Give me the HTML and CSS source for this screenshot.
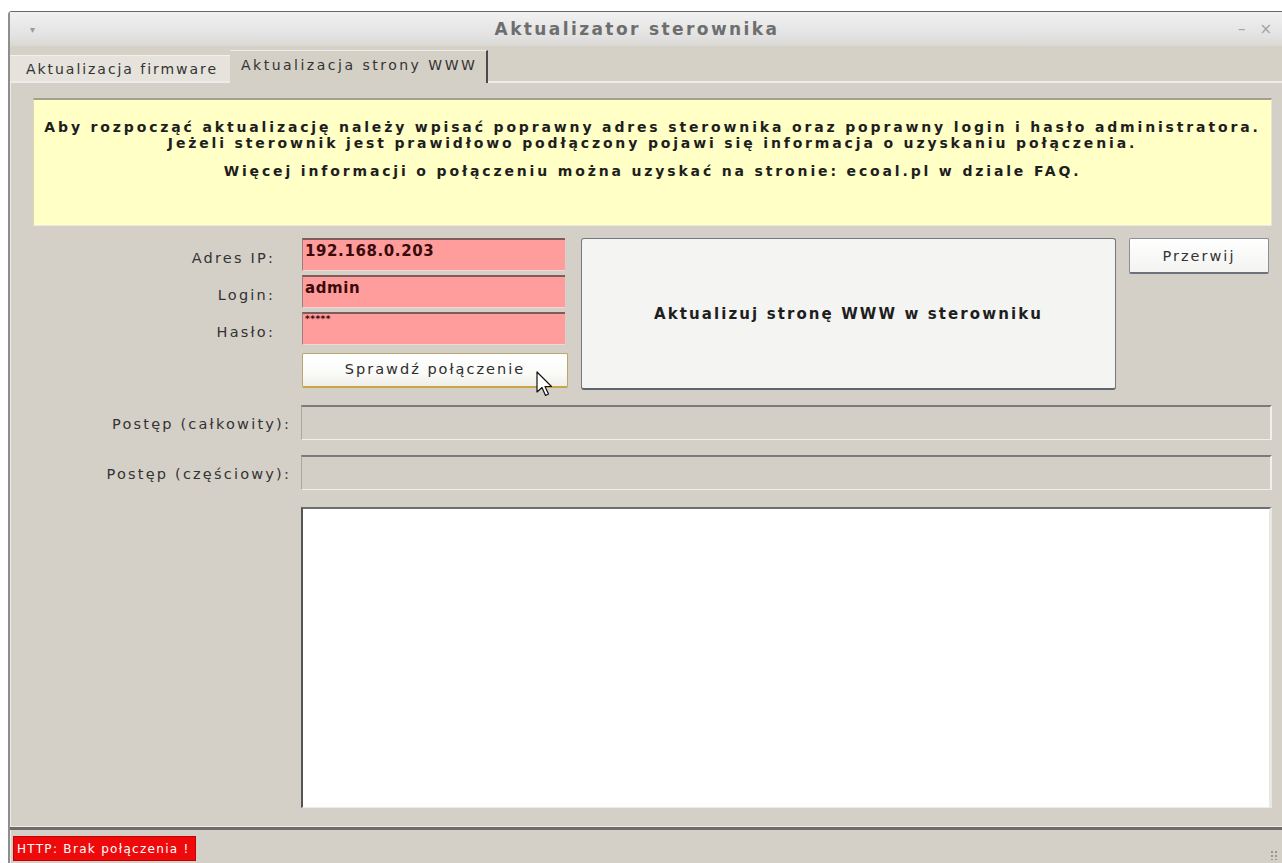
FILE: index.html
```html
<!DOCTYPE html>
<html lang="pl">
<head>
<meta charset="utf-8">
<title>Aktualizator sterownika</title>
<link rel="stylesheet" href="styles.css">
</head>
<body>
<div class="window">
  <div class="titlebar">
    <span class="menu-btn">&#9662;</span>
    <span class="title">Aktualizator sterownika</span>
    <span class="controls"><span class="ctl">&ndash;</span><span class="ctl">&times;</span></span>
  </div>

  <div class="tabstrip">
    <div class="tab">Aktualizacja firmware</div>
    <div class="tab active">Aktualizacja strony WWW</div>
    <div class="tab-fill"></div>
  </div>

  <div class="panel">
    <div class="notice">
      <p>Aby rozpocząć aktualizację należy wpisać poprawny adres sterownika oraz poprawny login i hasło administratora.<br>
      Jeżeli sterownik jest prawidłowo podłączony pojawi się informacja o uzyskaniu połączenia.</p>
      <p>Więcej informacji o połączeniu można uzyskać na stronie: ecoal.pl w dziale FAQ.</p>
    </div>

    <div class="controls-row">
      <div class="login-form">
        <label class="lbl">Adres IP:</label>
        <div class="field">192.168.0.203</div>
        <label class="lbl">Login:</label>
        <div class="field">admin</div>
        <label class="lbl">Hasło:</label>
        <div class="field pass">*****</div>
        <span></span>
        <button class="btn check">Sprawdź połączenie
          <svg class="cursor" width="20" height="30" viewBox="0 0 20 30">
            <path d="M2 1 L2 21 L7 16.5 L10.5 24.5 L13.5 23 L10 15.5 L16.5 15.5 Z" fill="#fff" stroke="#111" stroke-width="1.2" stroke-linejoin="round"/>
          </svg>
        </button>
      </div>
      <button class="btn update">Aktualizuj stronę WWW w sterowniku</button>
      <button class="btn abort">Przerwij</button>
    </div>

    <div class="progress-row">
      <span class="plbl">Postęp (całkowity):</span>
      <div class="bar"></div>
    </div>
    <div class="progress-row">
      <span class="plbl">Postęp (częściowy):</span>
      <div class="bar"></div>
    </div>

    <div class="log-row">
      <div class="log"></div>
    </div>
  </div>

  <div class="statusbar">
    <span class="status-err">HTTP: Brak połączenia !</span>
    <span class="grip"></span>
  </div>
</div>
</body>
</html>
```

FILE: styles.css
```css
* { box-sizing: border-box; }

html, body {
  margin: 0;
  padding: 0;
  background: #ffffff;
  width: 1282px;
  height: 863px;
  overflow: hidden;
}

body {
  font-family: "DejaVu Sans", "Noto Sans", sans-serif;
  color: #2a2a2a;
}

.window {
  margin: 11px 0 0 8px;
  height: 852px;
  display: flex;
  flex-direction: column;
  background: #d4d0c8;
  border-left: 2px solid #8e8e8e;
  border-top: 1px solid #6a6a6a;
  border-top-left-radius: 4px;
  box-shadow: inset 1px 0 0 #ecebe8;
}

/* ---- title bar ---- */
.titlebar {
  height: 34px;
  display: flex;
  align-items: center;
  background: linear-gradient(#f1f1f1, #e2e2e2 70%, #d9d8d4);
  padding: 0 10px 0 20px;
}
.menu-btn {
  color: #9a9a9a;
  font-size: 10px;
  width: 20px;
}
.title {
  flex: 1;
  text-align: center;
  font-weight: bold;
  font-size: 17px;
  letter-spacing: 2.4px;
  color: #6e6e6e;
  padding-right: 14px;
}
.controls {
  display: flex;
  gap: 14px;
  color: #a4a4a4;
  font-size: 15px;
}

/* ---- tabs ---- */
.tabstrip {
  height: 37px;
  display: flex;
  align-items: flex-end;
  background: #d5d1c6;
}
.tab {
  height: 28px;
  padding: 0 12px 0 16px;
  display: flex;
  align-items: center;
  font-size: 14px;
  letter-spacing: 1.95px;
  color: #333;
  background: #e5e3dc;
  border-top: 1px solid #f2f1ee;
  border-bottom: 2px solid #eeece8;
}
.tab.active {
  height: 33px;
  padding: 0 9px 4px 11px;
  letter-spacing: 2.5px;
  background: #d4d0c6;
  border-top: 1px solid #eeece8;
  border-right: 2px solid #4a4a4a;
  border-bottom: none;
}
.tab-fill {
  flex: 1;
  height: 2px;
  background: #eeece8;
}

/* ---- panel ---- */
.panel {
  flex: 1;
  display: flex;
  flex-direction: column;
  padding: 15px 10px 0 0;
}

.notice {
  margin-left: 23px;
  height: 128px;
  background: #ffffc6;
  border-top: 2px solid #a3a187;
  border-left: 1px solid #d9d8b8;
  border-right: 1px solid #e6e5d8;
  border-bottom: 1px solid #ebeadc;
  text-align: center;
  font-weight: bold;
  font-size: 14px;
  letter-spacing: 2.85px;
  line-height: 16px;
  color: #1e1e1e;
  padding-top: 19px;
}
.notice p { margin: 0 0 12px; }

/* ---- fields and buttons ---- */
.controls-row {
  display: flex;
  align-items: flex-start;
  margin-top: 12px;
}
.login-form {
  display: grid;
  grid-template-columns: 265px 263px;
  column-gap: 27px;
  row-gap: 4px;
}
.lbl {
  text-align: right;
  font-size: 14.5px;
  letter-spacing: 2.2px;
  color: #333;
  padding-top: 12px;
}
.field {
  height: 33px;
  background: #ff9d9d;
  border-top: 2px solid #7e5c5c;
  border-left: 1px solid #a37c7c;
  border-bottom: 1px solid #f5d4d4;
  font-weight: bold;
  font-size: 15px;
  letter-spacing: 0.6px;
  color: #3a0a0a;
  padding: 2px 0 0 2px;
}
.field.pass {
  font-size: 9px;
  letter-spacing: 0.5px;
  padding-top: 0;
}

.btn {
  font-family: inherit;
  cursor: default;
}
.check {
  position: relative;
  margin-top: 4px;
  width: 266px;
  height: 35px;
  background: linear-gradient(#ffffff, #fbfbf8 60%, #efeee8);
  border: 1px solid #b9a66a;
  border-bottom: 2px solid #c9a64a;
  border-radius: 2px;
  font-size: 14.5px;
  letter-spacing: 2px;
  color: #2d2d2d;
  padding: 0 0 2px;
}
.cursor {
  position: absolute;
  left: 232px;
  top: 17px;
}
.update {
  margin-left: 16px;
  width: 535px;
  height: 152px;
  background: #f4f4f2;
  border: 1px solid #737984;
  border-bottom: 2px solid #5e6470;
  border-radius: 3px;
  font-weight: bold;
  font-size: 15px;
  letter-spacing: 2.1px;
  color: #1e1e1e;
}
.abort {
  margin-left: 13px;
  width: 140px;
  height: 36px;
  background: linear-gradient(#ffffff, #f3f3f1);
  border: 1px solid #8a909a;
  border-bottom: 2px solid #6c727c;
  border-radius: 2px;
  font-size: 14.5px;
  letter-spacing: 2px;
  color: #333;
}

/* ---- progress ---- */
.progress-row {
  display: flex;
  align-items: center;
  margin-top: 15px;
}
.progress-row:first-of-type { margin-top: 16px; }
.plbl {
  width: 281px;
  text-align: right;
  font-size: 14.5px;
  letter-spacing: 2.2px;
  color: #333;
  padding-top: 3px;
}
.bar {
  margin-left: 10px;
  flex: 1;
  height: 35px;
  background: #d3cfc7;
  border-top: 2px solid #7b7b7b;
  border-left: 1px solid #aaa7a0;
  border-bottom: 1px solid #efeeea;
  border-right: 2px solid #f1f0ec;
}

.log-row {
  margin: 17px 0 0 291px;
  height: 301px;
  display: flex;
}
.log {
  flex: 1;
  background: #ffffff;
  border-top: 2px solid #6f6f6f;
  border-left: 2px solid #555;
  border-bottom: 1px solid #ecebe6;
  border-right: 3px solid #e9e8e3;
}

/* ---- status bar ---- */
.statusbar {
  height: 36px;
  margin-top: 17px;
  border-top: 3px solid #6e6c68;
  box-shadow: 0 -1px 0 #eeece7;
  display: flex;
  align-items: center;
  justify-content: space-between;
  padding: 4px 4px 0 3px;
}
.status-err {
  background: #ee0a0a;
  color: #fff;
  font-size: 12px;
  letter-spacing: 1.3px;
  height: 25px;
  width: 183px;
  display: flex;
  align-items: center;
  padding-left: 3px;
  border: 1px solid #c40000;
}
.grip {
  width: 8px;
  height: 10px;
  align-self: flex-end;
  margin-bottom: 3px;
  background-image: radial-gradient(circle, #9a9892 1px, transparent 1.3px);
  background-size: 4px 4px;
}
```
